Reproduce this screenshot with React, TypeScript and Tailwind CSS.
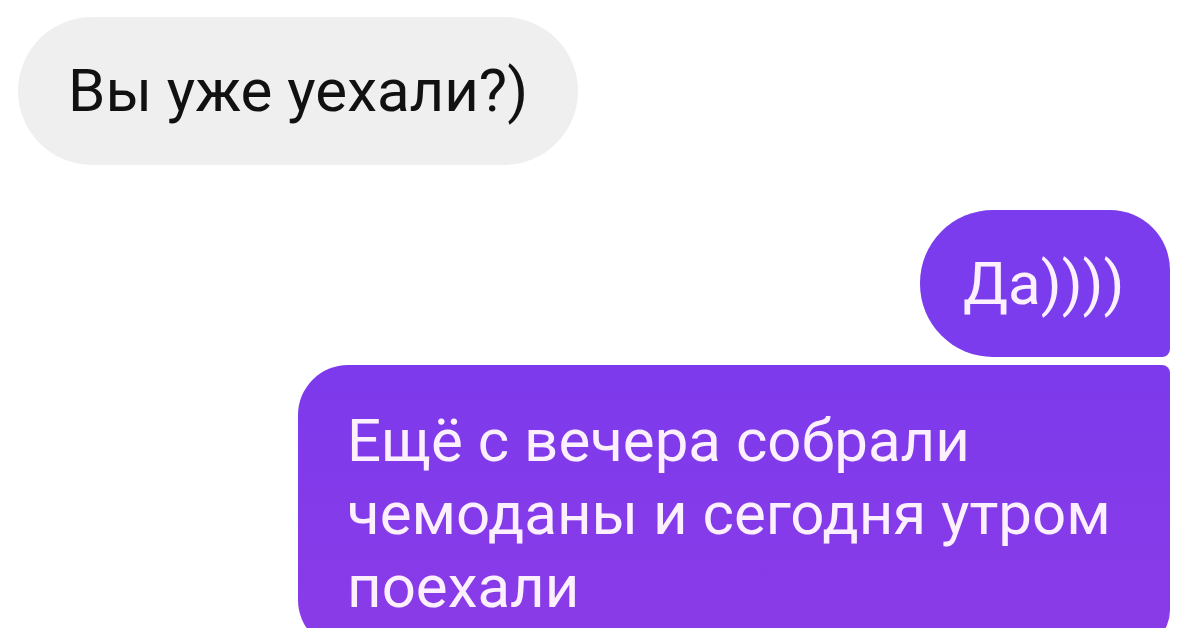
export default function App() {
  return (
    <div className="w-[1200px] h-[628px] overflow-hidden bg-white font-['Roboto',sans-serif] flex flex-col">
      <div className="ml-[18px] mt-[17px] self-start shrink-0 h-[148px] px-[50px] rounded-full bg-[#efefef] flex items-center">
        <span className="text-[60px] leading-none text-[#111111]">Вы уже уехали?)</span>
      </div>

      <div className="mt-[45px] mr-[30px] self-end shrink-0 h-[147px] w-[250px] pl-[43px] pr-[50px] rounded-tl-[73px] rounded-bl-[73px] rounded-tr-[60px] rounded-br-[8px] bg-[#7a3ced] flex items-center">
        <span className="text-[60px] leading-none text-[#fcf0ff]">Да))))</span>
      </div>

      <div className="mt-[8px] ml-[298px] w-[872px] h-[285px] shrink-0 pl-[49px] pt-[39px] rounded-tl-[50px] rounded-tr-[8px] rounded-bl-[50px] rounded-br-[40px] bg-gradient-to-b from-[#7c3aec] to-[#8b3be7]">
        <p className="text-[60px] leading-[73px] text-[#fcf0ff]">
          Ещё с вечера собрали
          <br />
          чемоданы и сегодня утром
          <br />
          поехали
        </p>
      </div>
    </div>
  );
}
